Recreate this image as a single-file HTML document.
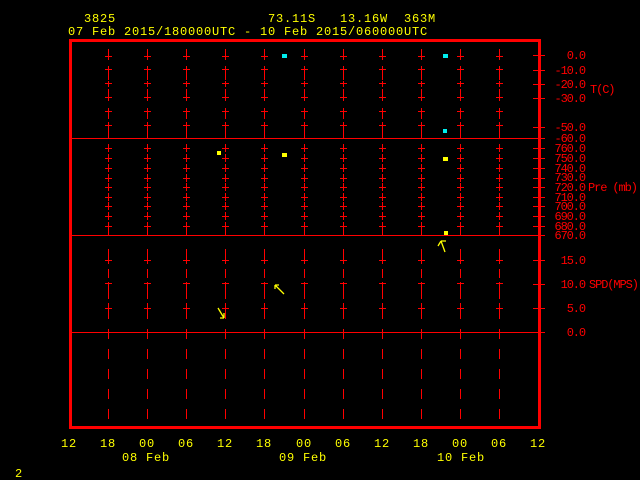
<!DOCTYPE html>
<html><head><style>
html,body{margin:0;padding:0;background:#000;width:640px;height:480px;overflow:hidden}
svg{display:block}
text{font-family:"Liberation Mono",monospace}
.y{font-size:12px;letter-spacing:0.8px}
.r{font-size:12px;letter-spacing:-1.1px}
</style></head><body>
<svg width="640" height="480" viewBox="0 0 640 480" xmlns="http://www.w3.org/2000/svg">
<defs>
<g id="col" stroke="#f00" stroke-width="1" fill="none">
<path d="M0.5 49V60M0.5 66V80M0.5 81V87M0.5 89V101M0.5 108V119M0.5 122V138
M-3 56.5H4M-3 69.5H4M-3 83.5H4M-3 97.5H4M-3 111.5H4M-3 125.5H4"/>
<path d="M0.5 144V152M0.5 154V162M0.5 164V172M0.5 174V182M0.5 183V191M0.5 193V201M0.5 202V210M0.5 212V220M0.5 222V235
M-3 148.5H4M-3 158.5H4M-3 168.5H4M-3 178.5H4M-3 187.5H4M-3 197.5H4M-3 206.5H4M-3 216.5H4M-3 226.5H4"/>
<path d="M0.5 249V264M0.5 269V278M0.5 282V299M0.5 303V319M-3 260.5H4M-3 283.5H4M-3 308.5H4"/>
<path d="M0.5 329V339M0.5 349V359M0.5 369V379M0.5 389V399M0.5 409V419"/>
</g>
</defs>
<g fill="#ff0" class="y">
<text x="84" y="22">3825</text>
<text x="268" y="22">73.11S</text>
<text x="340" y="22">13.16W</text>
<text x="404" y="22">363M</text>
<text x="68" y="35">07 Feb 2015/180000UTC - 10 Feb 2015/060000UTC</text>
</g>
<use href="#col" x="108"/><use href="#col" x="147"/><use href="#col" x="186"/><use href="#col" x="225"/>
<use href="#col" x="264"/><use href="#col" x="304"/><use href="#col" x="343"/><use href="#col" x="382"/>
<use href="#col" x="421"/><use href="#col" x="460"/><use href="#col" x="499"/>
<g stroke="#f00" stroke-width="1">
<path d="M72 138.5H545M72 235.5H545M72 332.5H545"/>
<path d="M533 55.5H545M533 70.5H545M533 84.5H545M533 98.5H545M533 127.5H545M533 148.5H545M533 158.5H545M533 168.5H545M533 178.5H545M533 187.5H545M533 197.5H545M533 206.5H545M533 216.5H545M533 226.5H545M533 260.5H545M533 284.5H545M533 308.5H545"/>
</g>
<rect x="70.5" y="40.5" width="469" height="387" fill="none" stroke="#f00" stroke-width="3"/>
<g fill="#f00" text-anchor="end" class="r">
<text x="585" y="59">0.0</text>
<text x="585" y="74">-10.0</text>
<text x="585" y="88">-20.0</text>
<text x="585" y="102">-30.0</text>
<text x="585" y="131">-50.0</text>
<text x="585" y="142">-60.0</text>
<text x="585" y="152">760.0</text>
<text x="585" y="162">750.0</text>
<text x="585" y="172">740.0</text>
<text x="585" y="181">730.0</text>
<text x="585" y="191">720.0</text>
<text x="585" y="201">710.0</text>
<text x="585" y="210">700.0</text>
<text x="585" y="220">690.0</text>
<text x="585" y="230">680.0</text>
<text x="585" y="239">670.0</text>
<text x="585" y="264">15.0</text>
<text x="585" y="288">10.0</text>
<text x="585" y="312">5.0</text>
<text x="585" y="336">0.0</text>
</g>
<g fill="#f00" class="r">
<text x="590" y="93">T(C)</text>
<text x="588" y="191">Pre (mb)</text>
<text x="589" y="288">SPD(MPS)</text>
</g>
<g fill="#0ee"><rect x="282" y="54" width="5" height="4"/><rect x="443" y="54" width="5" height="4"/><rect x="443" y="129" width="4" height="4"/></g>
<g fill="#ff0"><rect x="217" y="151" width="4" height="4"/><rect x="282" y="153" width="5" height="4"/><rect x="443" y="157" width="5" height="4"/><rect x="444" y="231" width="4" height="4"/></g>
<g stroke="#ff0" stroke-width="1.3" fill="none">
<path d="M275 285L284 294M275 285V289M275 285H279"/>
<path d="M218 308L224 318M224 318V313M224 318H220"/>
<path d="M441 241L445 252M441 241L438 246M441 241H446"/>
</g>
<g fill="#ff0" text-anchor="middle" class="y">
<text x="69" y="447">12</text><text x="108" y="447">18</text><text x="147" y="447">00</text><text x="186" y="447">06</text>
<text x="225" y="447">12</text><text x="264" y="447">18</text><text x="304" y="447">00</text><text x="343" y="447">06</text>
<text x="382" y="447">12</text><text x="421" y="447">18</text><text x="460" y="447">00</text><text x="499" y="447">06</text>
<text x="538" y="447">12</text>
</g>
<g fill="#ff0" class="y">
<text x="122" y="461">08 Feb</text>
<text x="279" y="461">09 Feb</text>
<text x="437" y="461">10 Feb</text>
<text x="15" y="477">2</text>
</g>
</svg>
</body></html>
